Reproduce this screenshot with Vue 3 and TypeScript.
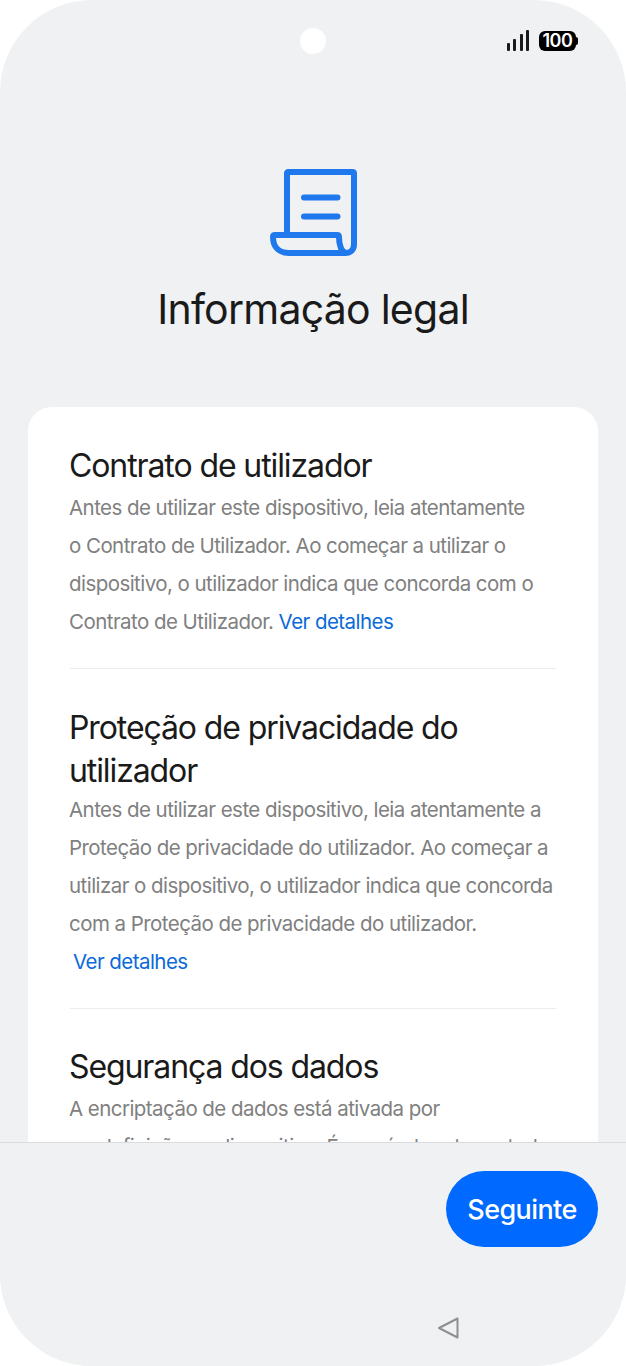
<script setup lang="ts">
interface Section {
  title: string;
  lines: string[];
}

const sections: Section[] = [
  {
    title: "Contrato de utilizador",
    lines: [
      "Antes de utilizar este dispositivo, leia atentamente",
      "o Contrato de Utilizador. Ao começar a utilizar o",
      "dispositivo, o utilizador indica que concorda com o",
      "Contrato de Utilizador.",
    ],
  },
  {
    title: "Proteção de privacidade do utilizador",
    lines: [
      "Antes de utilizar este dispositivo, leia atentamente a",
      "Proteção de privacidade do utilizador. Ao começar a",
      "utilizar o dispositivo, o utilizador indica que concorda",
      "com a Proteção de privacidade do utilizador.",
    ],
  },
  {
    title: "Segurança dos dados",
    lines: [
      "A encriptação de dados está ativada por",
      "predefinição no dispositivo. É possível proteger todos",
    ],
  },
];
const bars = [8, 12, 17, 21];
</script>

<template>
  <div class="screen">
    <div class="status">
      <span class="camera"></span>
      <div class="indicators">
        <span class="signal">
          <i v-for="h in bars" :key="h" :style="{ height: h + 'px' }"></i>
        </span>
        <span class="battery">100</span>
      </div>
    </div>

    <main class="content">
      <svg class="doc-icon" width="87" height="87" viewBox="0 0 87 87" fill="none" stroke="#1f78ec" stroke-width="6" stroke-linecap="round" stroke-linejoin="round">
        <path d="M17 66V4.500C17 3.500 17.500 3 18.500 3H82.500C83.500 3 84 3.500 84 4.500V75C84 80.500 81 84 75.500 84H19C9 84 3 78 3 68C3 66.500 3.500 66 5 66H67C68.500 66 69 67 69 68C69 75 71 84 77 84" />
        <path d="M34 28.500H67.500M34 47.500H67.500" stroke-width="6" />
      </svg>
      <h1>Informação legal</h1>

      <section class="card">
        <article v-for="(s, i) in sections" :key="s.title" class="block">
          <h2>{{ s.title }}</h2>
          <p v-for="(line, n) in s.lines" :key="n">
            {{ line }}<a v-if="i === 0 && n === 3" class="link"> Ver detalhes</a>
          </p>
          <p v-if="i === 1"><a class="link lone">Ver detalhes</a></p>
        </article>
      </section>
    </main>

    <footer class="actions">
      <button class="next">Seguinte</button>
      <svg class="back" width="24" height="24" viewBox="0 0 24 24" fill="none" stroke="#8d8f92" stroke-width="2" stroke-linejoin="round">
        <path d="M20.500 2.500V21.500L2 12Z" />
      </svg>
    </footer>
  </div>
</template>

<style>
html,
body {
  margin: 0;
  background: #fff;
}
</style>

<style scoped>
.screen {
  position: relative;
  width: 626px;
  height: 1366px;
  display: flex;
  flex-direction: column;
  background: #eff1f3;
  border-radius: 92px;
  overflow: hidden;
  font-family: Inter, "Noto Sans", sans-serif;
}

.status {
  position: absolute;
  inset: 0 0 auto 0;
  height: 80px;
}

.camera {
  position: absolute;
  left: 300px;
  top: 28px;
  width: 26px;
  height: 26px;
  border-radius: 50%;
  background: #fff;
}

.indicators {
  position: absolute;
  left: 507px;
  top: 30px;
  display: flex;
  align-items: flex-end;
  gap: 10px;
}

.signal {
  display: flex;
  align-items: flex-end;
  gap: 3.300px;
}

.signal i {
  display: block;
  width: 3px;
  background: #1a1a1a;
  border-radius: 1px;
}

.battery {
  position: relative;
  width: 37px;
  height: 20px;
  border-radius: 6px;
  background: #000;
  color: #fff;
  font-size: 18px;
  font-weight: 600;
  line-height: 20px;
  text-align: center;
  letter-spacing: -0.6px;
}

.battery::after {
  content: "";
  position: absolute;
  right: -2px;
  top: 6px;
  width: 2px;
  height: 8px;
  background: #000;
  border-radius: 0 2px 2px 0;
}

.content {
  flex: 1;
  min-height: 0;
  overflow: hidden;
  display: flex;
  flex-direction: column;
  align-items: center;
  padding-top: 168.500px;
}

.doc-icon {
  flex: none;
}

h1 {
  margin: 25.500px 0 0;
  font-size: 41px;
  line-height: 56px;
  font-weight: 420;
  letter-spacing: -0.75px;
  color: #1a1a1a;
}

.card {
  flex: none;
  box-sizing: border-box;
  width: 570px;
  margin-top: 70px;
  padding: 37px 42px 0;
  background: #fff;
  border-radius: 24px 24px 0 0;
}

.block {
  padding-bottom: 27px;
  margin-bottom: 36.500px;
  border-bottom: 1px solid #ececee;
}

.block:last-child {
  border-bottom: 0;
}

h2 {
  margin: 0 0 2px -1px;
  font-size: 32px;
  line-height: 43px;
  font-weight: 420;
  letter-spacing: -1.1px;
  color: #1a1a1a;
}

.block:nth-child(2) h2 {
  margin-bottom: -1px;
}

.block:nth-child(3) h2 {
  margin-bottom: 1.500px;
}

p {
  margin: 0 0 0 -1px;
  font-size: 20.500px;
  line-height: 38px;
  letter-spacing: -0.55px;
  color: #808080;
  white-space: nowrap;
}

.link {
  color: #0a6ad8;
}

.lone {
  margin-left: 4px;
}

.actions {
  position: relative;
  flex: none;
  height: 224px;
  box-sizing: border-box;
  border-top: 1px solid #d9dbde;
  padding: 28px 28px 0 0;
  display: flex;
  justify-content: flex-end;
  align-items: flex-start;
  background: #eff1f3;
}

.next {
  width: 152px;
  height: 76px;
  border: 0;
  border-radius: 38px;
  background: #0069ff;
  color: #fff;
  font-family: inherit;
  font-size: 27px;
  font-weight: 500;
  letter-spacing: -0.6px;
}

.back {
  position: absolute;
  left: 437px;
  top: 173px;
}
</style>
